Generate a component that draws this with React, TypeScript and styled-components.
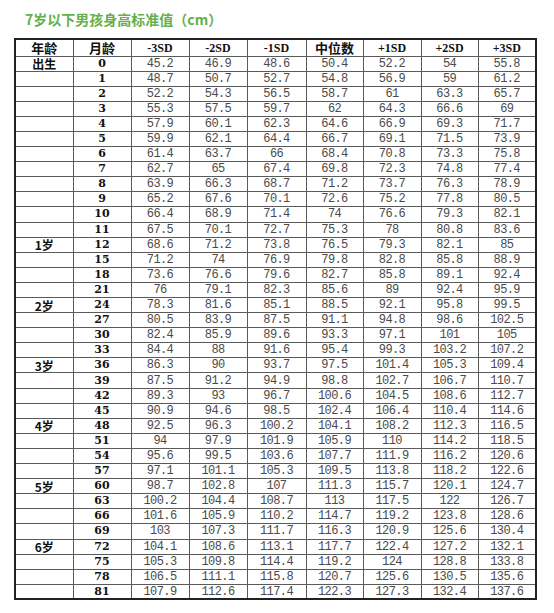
import React, { FC } from "react";
import styled, { createGlobalStyle } from "styled-components";

type Row = { month: number; age?: string; values: number[] };

const rows: Row[] = [
  { month: 0, age: "出生", values: [45.2, 46.9, 48.6, 50.4, 52.2, 54, 55.8] },
  { month: 1, values: [48.7, 50.7, 52.7, 54.8, 56.9, 59, 61.2] },
  { month: 2, values: [52.2, 54.3, 56.5, 58.7, 61, 63.3, 65.7] },
  { month: 3, values: [55.3, 57.5, 59.7, 62, 64.3, 66.6, 69] },
  { month: 4, values: [57.9, 60.1, 62.3, 64.6, 66.9, 69.3, 71.7] },
  { month: 5, values: [59.9, 62.1, 64.4, 66.7, 69.1, 71.5, 73.9] },
  { month: 6, values: [61.4, 63.7, 66, 68.4, 70.8, 73.3, 75.8] },
  { month: 7, values: [62.7, 65, 67.4, 69.8, 72.3, 74.8, 77.4] },
  { month: 8, values: [63.9, 66.3, 68.7, 71.2, 73.7, 76.3, 78.9] },
  { month: 9, values: [65.2, 67.6, 70.1, 72.6, 75.2, 77.8, 80.5] },
  { month: 10, values: [66.4, 68.9, 71.4, 74, 76.6, 79.3, 82.1] },
  { month: 11, values: [67.5, 70.1, 72.7, 75.3, 78, 80.8, 83.6] },
  { month: 12, age: "1岁", values: [68.6, 71.2, 73.8, 76.5, 79.3, 82.1, 85] },
  { month: 15, values: [71.2, 74, 76.9, 79.8, 82.8, 85.8, 88.9] },
  { month: 18, values: [73.6, 76.6, 79.6, 82.7, 85.8, 89.1, 92.4] },
  { month: 21, values: [76, 79.1, 82.3, 85.6, 89, 92.4, 95.9] },
  { month: 24, age: "2岁", values: [78.3, 81.6, 85.1, 88.5, 92.1, 95.8, 99.5] },
  { month: 27, values: [80.5, 83.9, 87.5, 91.1, 94.8, 98.6, 102.5] },
  { month: 30, values: [82.4, 85.9, 89.6, 93.3, 97.1, 101, 105] },
  { month: 33, values: [84.4, 88, 91.6, 95.4, 99.3, 103.2, 107.2] },
  { month: 36, age: "3岁", values: [86.3, 90, 93.7, 97.5, 101.4, 105.3, 109.4] },
  { month: 39, values: [87.5, 91.2, 94.9, 98.8, 102.7, 106.7, 110.7] },
  { month: 42, values: [89.3, 93, 96.7, 100.6, 104.5, 108.6, 112.7] },
  { month: 45, values: [90.9, 94.6, 98.5, 102.4, 106.4, 110.4, 114.6] },
  { month: 48, age: "4岁", values: [92.5, 96.3, 100.2, 104.1, 108.2, 112.3, 116.5] },
  { month: 51, values: [94, 97.9, 101.9, 105.9, 110, 114.2, 118.5] },
  { month: 54, values: [95.6, 99.5, 103.6, 107.7, 111.9, 116.2, 120.6] },
  { month: 57, values: [97.1, 101.1, 105.3, 109.5, 113.8, 118.2, 122.6] },
  { month: 60, age: "5岁", values: [98.7, 102.8, 107, 111.3, 115.7, 120.1, 124.7] },
  { month: 63, values: [100.2, 104.4, 108.7, 113, 117.5, 122, 126.7] },
  { month: 66, values: [101.6, 105.9, 110.2, 114.7, 119.2, 123.8, 128.6] },
  { month: 69, values: [103, 107.3, 111.7, 116.3, 120.9, 125.6, 130.4] },
  { month: 72, age: "6岁", values: [104.1, 108.6, 113.1, 117.7, 122.4, 127.2, 132.1] },
  { month: 75, values: [105.3, 109.8, 114.4, 119.2, 124, 128.8, 133.8] },
  { month: 78, values: [106.5, 111.1, 115.8, 120.7, 125.6, 130.5, 135.6] },
  { month: 81, values: [107.9, 112.6, 117.4, 122.3, 127.3, 132.4, 137.6] },
];

const sdHeaders = ["-3SD", "-2SD", "-1SD", "中位数", "+1SD", "+2SD", "+3SD"];
const colWidths = [58, 58, 58, 58, 59, 57, 58, 57, 58];

const App: FC = () => (
  <>
    <GlobalStyle />
    <Page>
      <Title>7岁以下男孩身高标准值（cm）</Title>
      <Table>
        <colgroup>
          {colWidths.map((w, i) => (
            <col key={i} style={{ width: w }} />
          ))}
        </colgroup>
        <thead>
          <HeadRow>
            <HeadCell cjk>年龄</HeadCell>
            <HeadCell cjk>月龄</HeadCell>
            {sdHeaders.map((h) => (
              <HeadCell key={h} cjk={h === "中位数"}>
                {h}
              </HeadCell>
            ))}
          </HeadRow>
        </thead>
        <tbody>
          {rows.map((r) => (
            <BodyRow key={r.month}>
              <AgeCell>{r.age ?? ""}</AgeCell>
              <MonthCell>{r.month}</MonthCell>
              {r.values.map((v, i) => (
                <ValueCell key={i}>{v}</ValueCell>
              ))}
            </BodyRow>
          ))}
        </tbody>
      </Table>
    </Page>
  </>
);

export default App;

const GlobalStyle = createGlobalStyle`
  body {
    margin: 0;
    background: #fff;
  }
`;

const Page = styled.div`
  width: 554px;
  height: 613px;
  padding: 11px 0 0 14px;
  box-sizing: border-box;
`;

const Title = styled.h1`
  margin: 0 0 10px 11px;
  font-family: "Noto Sans CJK SC", "Noto Sans", sans-serif;
  font-size: 14px;
  line-height: 17px;
  font-weight: 700;
  color: #64b04a;
`;

const Table = styled.table`
  width: 521px;
  table-layout: fixed;
  border-collapse: collapse;
  border: 2px solid #222;
`;

const HeadRow = styled.tr`
  height: 17px;
`;

const BodyRow = styled.tr`
  height: 15.1px;
`;

const Cell = styled.td`
  height: auto;
  padding: 0;
  border: 1px solid #5a5a5a;
  text-align: center;
  vertical-align: middle;
  line-height: 12px;
  white-space: nowrap;
  overflow: hidden;
`;

const HeadCell = styled(Cell).attrs({ as: "th" })<{ cjk?: boolean }>`
  color: #111;
  font-weight: 700;
  line-height: 14px;
  font-family: ${(p) =>
    p.cjk ? '"Noto Sans CJK SC", sans-serif' : '"Liberation Serif", serif'};
  font-size: ${(p) => (p.cjk ? "13px" : "12px")};
`;

const AgeCell = styled(Cell)`
  color: #111;
  font-family: "Noto Sans CJK SC", sans-serif;
  font-weight: 700;
  font-size: 12px;
  line-height: 13px;
`;

const MonthCell = styled(Cell)`
  color: #111;
  font-family: "DejaVu Serif", serif;
  font-weight: 700;
  font-size: 11px;
`;

const ValueCell = styled(Cell)`
  color: #4a4a4a;
  font-family: "Liberation Mono", monospace;
  font-size: 12px;
  letter-spacing: -0.6px;
`;
